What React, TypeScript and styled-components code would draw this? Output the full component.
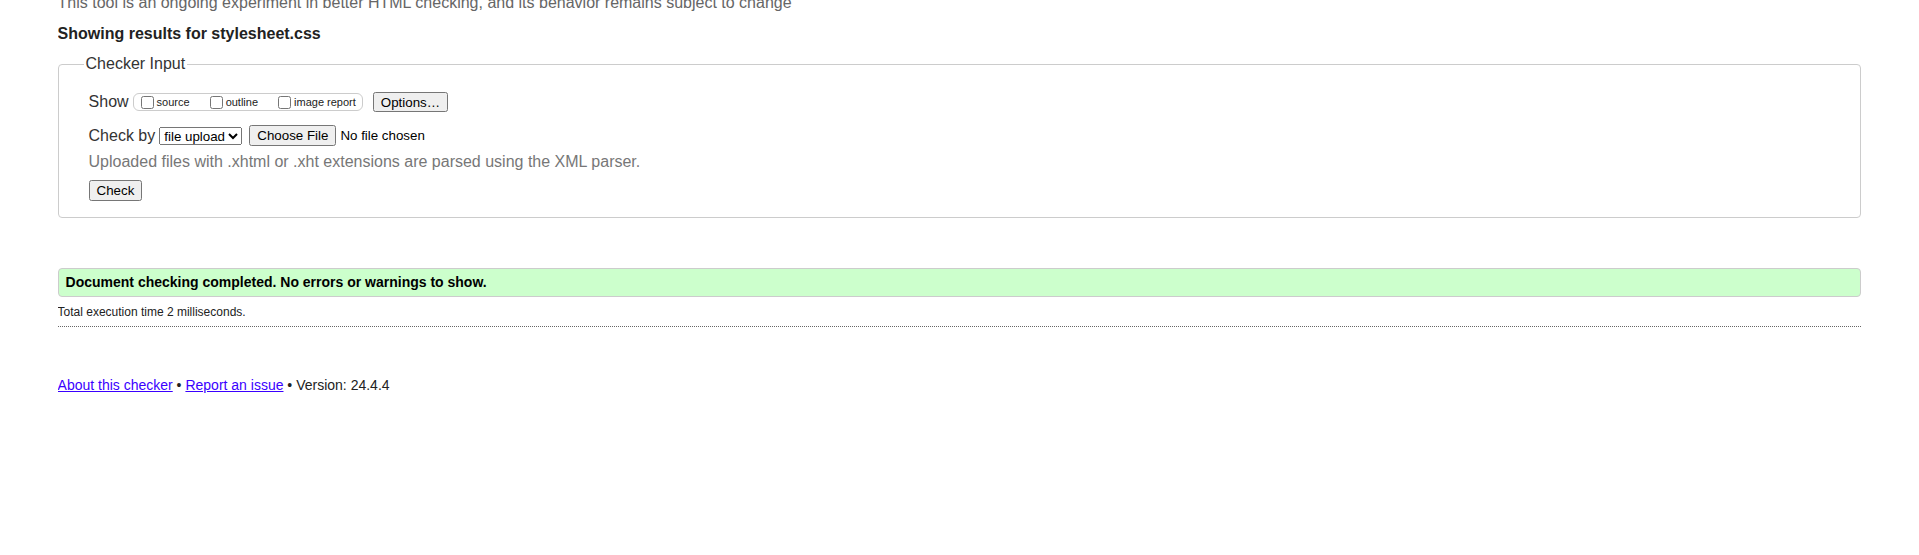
import React from 'react'
import styled, { createGlobalStyle } from 'styled-components'

const GlobalStyle = createGlobalStyle`
  html, body {
    margin: 0;
    padding: 0;
    background: #fff;
  }

  body {
    margin: 0 3%;
    font-family: "Liberation Sans", Arial, sans-serif;
    color: #222;
  }
`

const Page = styled.div`
  margin-top: -6px;
`

const Intro = styled.p`
  margin: 0;
  font-size: 16px;
  color: #666;
`

const Heading = styled.h2`
  margin: 13px 0 0;
  font-size: 16px;
  font-weight: bold;
  color: #222;
`

const Fieldset = styled.fieldset`
  margin: 12px 0 0;
  padding: 0 30px 16px;
  border: 1px solid #ccc;
  border-radius: 4px;
  min-width: 0;
`

const Legend = styled.legend`
  margin-left: -5px;
  padding: 0 2px;
  font-size: 16px;
  color: #333;
`

const Row = styled.div<{ $top: number }>`
  display: flex;
  align-items: center;
  margin-top: ${({ $top }) => $top}px;
  font-size: 16px;
  color: #333;
  white-space: nowrap;
`

const RowLabel = styled.span`
  margin-right: 4px;
`

const ShowBox = styled.span`
  display: inline-flex;
  align-items: center;
  height: 16px;
  padding: 0 6px 0 3px;
  border: 1px solid #ccc;
  border-radius: 6px;
  margin-right: 10px;
`

const Choice = styled.label<{ $last?: boolean }>`
  display: inline-flex;
  align-items: center;
  font-size: 11px;
  color: #222;
  margin-right: ${({ $last }) => ($last ? 0 : 16)}px;

  input {
    width: 13px;
    height: 13px;
    margin: 0 3px 0 4px;
  }
`

const NativeButton = styled.button`
  font-family: "Liberation Sans", Arial, sans-serif;
  font-size: 13.333px;
  color: #000;
  height: 20px;
  padding: 1px 6px;
`

const Select = styled.select`
  font-family: "Liberation Sans", Arial, sans-serif;
  font-size: 13.333px;
  color: #000;
  height: 18px;
  margin-right: 7px;
`

const FileInput = styled.input`
  font-family: "Liberation Sans", Arial, sans-serif;
  font-size: 13.333px;
  color: #000;

  &::file-selector-button {
    font-family: "Liberation Sans", Arial, sans-serif;
    font-size: 13.333px;
    height: 21px;
  }
`

const Note = styled.p`
  margin: 7px 0 0;
  font-size: 16px;
  color: #777;
`

const CheckButton = styled(NativeButton)`
  margin-top: 9px;
  height: 21px;
`

const Success = styled.div`
  margin-top: 50px;
  padding: 5px 6px 6px 7px;
  background: #cfc;
  border: 1px solid #ccc;
  border-radius: 4px;
  font-size: 14px;
  font-weight: bold;
  color: #000;
`

const Stats = styled.p`
  margin: 8px 0 0;
  padding-bottom: 7px;
  font-size: 12px;
  color: #222;
  border-bottom: 1px dotted #666;
`

const Footer = styled.p`
  margin: 50px 0 0;
  font-size: 14px;
  color: #222;

  a {
    color: #3a00ff;
  }
`

export default function App() {
  return (
    <>
      <GlobalStyle />
      <Page>
        <Intro>
          This tool is an ongoing experiment in better HTML checking, and its behavior remains subject to change
        </Intro>
        <Heading>Showing results for stylesheet.css</Heading>
        <Fieldset>
          <Legend>Checker Input</Legend>
          <Row $top={19}>
            <RowLabel>Show</RowLabel>
            <ShowBox>
              <Choice>
                <input type="checkbox" />
                source
              </Choice>
              <Choice>
                <input type="checkbox" />
                outline
              </Choice>
              <Choice $last>
                <input type="checkbox" />
                image report
              </Choice>
            </ShowBox>
            <NativeButton type="button">Options…</NativeButton>
          </Row>
          <Row $top={13}>
            <RowLabel>Check by</RowLabel>
            <Select defaultValue="upload">
              <option value="address">address</option>
              <option value="upload">file upload</option>
              <option value="text">text input</option>
            </Select>
            <FileInput type="file" />
          </Row>
          <Note>Uploaded files with .xhtml or .xht extensions are parsed using the XML parser.</Note>
          <CheckButton type="button">Check</CheckButton>
        </Fieldset>
        <Success>Document checking completed. No errors or warnings to show.</Success>
        <Stats>Total execution time 2 milliseconds.</Stats>
        <Footer>
          <a href="#about">About this checker</a> • <a href="#issue">Report an issue</a> • Version: 24.4.4
        </Footer>
      </Page>
    </>
  )
}
